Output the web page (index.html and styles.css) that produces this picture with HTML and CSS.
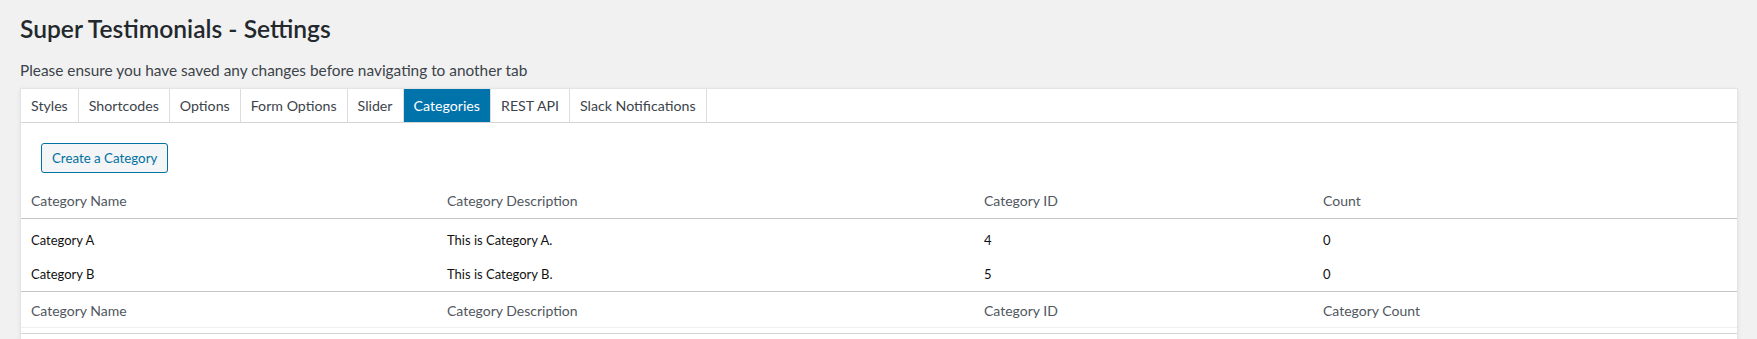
FILE: index.html
```html
<!DOCTYPE html>
<html lang="en">
<head>
    <meta charset="UTF-8">
    <meta name="viewport" content="width=device-width, initial-scale=1.0">
    <title>Super Testimonials - Settings</title>
    <link rel="stylesheet" href="styles.css">
</head>
<body>
    <div class="wrap">
        <h1>Super Testimonials - Settings</h1>
        <p class="notice">Please ensure you have saved any changes before navigating to another tab</p>

        <div class="panel">
            <div class="tabs">
                <a class="tab" href="#">Styles</a>
                <a class="tab" href="#">Shortcodes</a>
                <a class="tab" href="#">Options</a>
                <a class="tab" href="#">Form Options</a>
                <a class="tab" href="#">Slider</a>
                <a class="tab active" href="#">Categories</a>
                <a class="tab" href="#">REST API</a>
                <a class="tab" href="#">Slack Notifications</a>
            </div>

            <div class="tab-body">
                <button class="button">Create a Category</button>
            </div>

            <table class="cat-table">
                <colgroup>
                    <col class="col-name">
                    <col class="col-desc">
                    <col class="col-id">
                    <col>
                </colgroup>
                <thead>
                    <tr>
                        <th>Category Name</th>
                        <th>Category Description</th>
                        <th>Category ID</th>
                        <th>Count</th>
                    </tr>
                </thead>
                <tbody>
                    <tr>
                        <td>Category A</td>
                        <td>This is Category A.</td>
                        <td>4</td>
                        <td>0</td>
                    </tr>
                    <tr>
                        <td>Category B</td>
                        <td>This is Category B.</td>
                        <td>5</td>
                        <td>0</td>
                    </tr>
                </tbody>
                <tfoot>
                    <tr>
                        <th>Category Name</th>
                        <th>Category Description</th>
                        <th>Category ID</th>
                        <th>Category Count</th>
                    </tr>
                </tfoot>
            </table>
            <div class="table-end"></div>
        </div>
    </div>
</body>
</html>
```

FILE: styles.css
```css
body {
    margin: 0;
    padding: 0 19px 0 20px;
    font-family: Lato, "Noto Sans", sans-serif;
    background-color: #f1f1f1;
    color: #3c434a;
}

.wrap {
    padding-top: 14px;
}

h1 {
    margin: 0;
    font-size: 24.6px;
    line-height: 29px;
    font-weight: 600;
    color: #23282d;
}

.notice {
    margin: 17px 0 8px;
    font-size: 15.4px;
    line-height: 20px;
    color: #3c434a;
}

.panel {
    background-color: #fff;
    border: 1px solid #e2e4e7;
    box-shadow: 0 1px 4px rgba(0, 0, 0, 0.07);
}

.tabs {
    display: flex;
    border-bottom: 1px solid #d5d5d5;
}

.tab {
    padding: 0 10px;
    line-height: 33px;
    font-size: 14.2px;
    color: #3c434a;
    text-decoration: none;
    border-right: 1px solid #dcdcde;
}

.tab.active {
    background-color: #0073aa;
    color: #fff;
}

.tab-body {
    padding: 20px 20px 10px;
}

.button {
    height: 30px;
    padding: 0 10px;
    font-family: inherit;
    font-size: 13.3px;
    line-height: 28px;
    color: #0071a1;
    background-color: #f3f5f6;
    border: 1px solid #0071a1;
    border-radius: 3px;
    cursor: pointer;
}

.cat-table {
    width: 100%;
    border-collapse: collapse;
    table-layout: fixed;
}

.col-name {
    width: 416px;
}

.col-desc {
    width: 537px;
}

.col-id {
    width: 339px;
}

.cat-table th {
    padding: 8px 10px;
    font-size: 14px;
    line-height: 19px;
    font-weight: 400;
    text-align: left;
    color: #50575e;
}

.cat-table thead th {
    border-bottom: 1px solid #c3c4c7;
}

.cat-table td {
    padding: 8px 10px;
    font-size: 13px;
    line-height: 18px;
    color: #111;
}

.cat-table tbody tr:first-child td {
    padding-top: 12px;
}

.cat-table tfoot th {
    padding: 9px 10px 7px;
    border-top: 1px solid #c3c4c7;
    border-bottom: 1px solid #f0f0f1;
}

.table-end {
    height: 5px;
    border-bottom: 1px solid #d5d5d5;
    margin-bottom: 20px;
}
```
